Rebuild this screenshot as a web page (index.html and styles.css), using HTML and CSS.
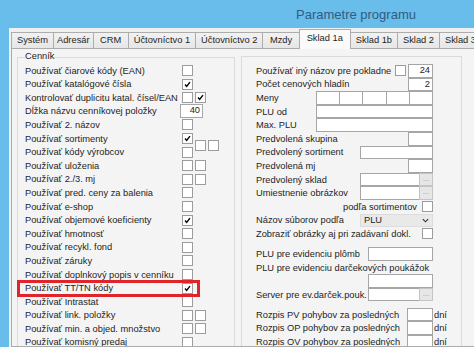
FILE: index.html
```html
<!DOCTYPE html>
<html lang="sk">

<head>
    <meta charset="UTF-8">
    <title>Parametre programu</title>
    <link rel="stylesheet" href="styles.css">
</head>

<body>

    <div class="window">
        <div class="titlebar"><span class="title">Parametre programu</span></div>

        <div class="client">
            <div class="tabs">
                <div class="tab">Systém</div>
                <div class="tab">Adresár</div>
                <div class="tab">CRM</div>
                <div class="tab">Účtovníctvo 1</div>
                <div class="tab">Účtovníctvo 2</div>
                <div class="tab">Mzdy</div>
                <div class="tab active">Sklad 1a</div>
                <div class="tab">Sklad 1b</div>
                <div class="tab">Sklad 2</div>
                <div class="tab">Sklad 3</div>
            </div>

            <div class="page">
                <!-- left group -->
                <div class="group group-left">
                    <div class="caption">Cenník</div>
                    <div class="row"><span class="label">Používať čiarové kódy (EAN)</span><span class="chk"></span></div>
                    <div class="row"><span class="label">Používať katalógové čísla</span><span class="chk"><svg viewBox="0 0 11 11"><polyline points="2.5,5.5 4.5,7.8 8.5,2.5"/></svg></span></div>
                    <div class="row"><span class="label">Kontrolovať duplicitu katal. čísel/EAN</span><span class="chk"></span><span class="chk"><svg viewBox="0 0 11 11"><polyline points="2.5,5.5 4.5,7.8 8.5,2.5"/></svg></span></div>
                    <div class="row"><span class="label">Dĺžka názvu cenníkovej položky</span><span class="box num short">40</span></div>
                    <div class="row"><span class="label">Používať 2. názov</span><span class="chk"></span></div>
                    <div class="row"><span class="label">Používať sortimenty</span><span class="chk"><svg viewBox="0 0 11 11"><polyline points="2.5,5.5 4.5,7.8 8.5,2.5"/></svg></span></div>
                    <div class="row"><span class="label">Používať kódy výrobcov</span><span class="chk"></span><span class="raised"><span class="chk"></span><span class="chk"></span></span></div>
                    <div class="row"><span class="label">Používať uloženia</span><span class="chk"></span><span class="chk"></span></div>
                    <div class="row"><span class="label">Používať 2./3. mj</span><span class="chk"></span><span class="chk"></span></div>
                    <div class="row"><span class="label">Používať pred. ceny za balenia</span><span class="chk"></span></div>
                    <div class="row"><span class="label">Používať e-shop</span><span class="chk"></span></div>
                    <div class="row"><span class="label">Používať objemové koeficienty</span><span class="chk"><svg viewBox="0 0 11 11"><polyline points="2.5,5.5 4.5,7.8 8.5,2.5"/></svg></span></div>
                    <div class="row"><span class="label">Používať hmotnosť</span><span class="chk"></span></div>
                    <div class="row"><span class="label">Používať recykl. fond</span><span class="chk"></span></div>
                    <div class="row"><span class="label">Používať záruky</span><span class="chk"></span></div>
                    <div class="row"><span class="label">Používať doplnkový popis v cenníku</span><span class="chk"></span></div>
                    <div class="row marked"><span class="label">Používať TT/TN kódy</span><span class="chk"><svg viewBox="0 0 11 11"><polyline points="2.5,5.5 4.5,7.8 8.5,2.5"/></svg></span></div>
                    <div class="row"><span class="label">Používať Intrastat</span><span class="chk"></span></div>
                    <div class="row"><span class="label">Používať link. položky</span><span class="chk"></span><span class="chk"></span></div>
                    <div class="row"><span class="label">Používať min. a objed. množstvo</span><span class="chk"></span><span class="chk"></span></div>
                    <div class="row"><span class="label">Používať komisný predaj</span><span class="chk"></span></div>
                </div>

                <!-- right group -->
                <div class="group group-right">
                    <div class="row"><span class="label">Používať iný názov pre pokladne</span><span class="chk gap"></span><span class="box num short">24</span></div>
                    <div class="row"><span class="label">Počet cenových hladín</span><span class="box num short">2</span></div>
                    <div class="row"><span class="label">Meny</span>
                        <span class="cells"><span class="box cell"></span><span class="box cell"></span><span class="box cell"></span><span class="box cell"></span><span class="box cell"></span></span>
                    </div>
                    <div class="row"><span class="label">PLU od</span><span class="box wide"></span></div>
                    <div class="row"><span class="label">Max. PLU</span><span class="box wide"></span></div>
                    <div class="row"><span class="label">Predvolená skupina</span><span class="box short"></span></div>
                    <div class="row"><span class="label">Predvolený sortiment</span><span class="box mid"></span></div>
                    <div class="row"><span class="label">Predvolená mj</span><span class="box short"></span></div>
                    <div class="row"><span class="label">Predvolený sklad</span><span class="box mid-btn"></span><span class="dots">...</span></div>
                    <div class="row"><span class="label">Umiestnenie obrázkov</span><span class="box mid-btn"></span><span class="dots">...</span></div>
                    <div class="row end"><span class="sub-label">podľa sortimentov</span><span class="chk"></span></div>
                    <div class="row"><span class="label">Názov súborov podľa</span>
                        <span class="select">PLU<svg viewBox="0 0 8 5"><polyline points="1,1 4,4 7,1"/></svg></span>
                    </div>
                    <div class="row"><span class="label">Zobraziť obrázky aj pri zadávaní dokl.</span><span class="chk"></span></div>

                    <div class="block">
                        <div class="row"><span class="label">PLU pre evidenciu plômb</span><span class="box plu"></span></div>
                        <div class="row"><span class="label">PLU pre evidenciu darčekových poukážok</span></div>
                        <div class="row end"><span class="box plu"></span></div>
                        <div class="row"><span class="label">Server pre ev.darček.pouk.</span><span class="box plu-btn"></span><span class="dots">...</span></div>
                    </div>

                    <div class="block">
                        <div class="row"><span class="label">Rozpis PV pohybov za posledných</span><span class="box days"></span><span class="unit">dní</span></div>
                        <div class="row"><span class="label">Rozpis OP pohybov za posledných</span><span class="box days"></span><span class="unit">dní</span></div>
                        <div class="row"><span class="label">Rozpis OV pohybov za posledných</span><span class="box days"></span><span class="unit">dní</span></div>
                        <div class="row"><span class="label"></span><span class="box days"></span><span class="unit"></span></div>
                    </div>
                </div>
            </div>
        </div>
    </div>

</body>

</html>
```

FILE: styles.css
```css
*,
*::before,
*::after {
    box-sizing: border-box;
}

body {
    margin: 0;
    width: 474px;
    height: 347px;
    overflow: hidden;
    background-color: #69bdea;
    font-family: 'Liberation Sans', Arial, sans-serif;
    font-size: 9.3px;
    color: #1e1e1e;
}

.window {
    display: flex;
    flex-direction: column;
    height: 347px;
}

.titlebar {
    flex-shrink: 0;
    height: 28px;
    display: flex;
    align-items: center;
    padding-left: 296px;
    font-size: 13px;
    color: #2f5c82;
}

.client {
    flex: 1;
    min-height: 0;
    width: 540px;
    margin-left: 9px;
    background-color: #f0f0f0;
    display: flex;
    flex-direction: column;
}

/* tab strip */
.tabs {
    flex-shrink: 0;
    height: 20px;
    display: flex;
    align-items: flex-end;
    padding-left: 3px;
}

.tab {
    height: 16px;
    line-height: 14px;
    padding: 0 5px;
    margin-left: -1px;
    border: 1px solid #acacac;
    border-bottom: none;
    background: linear-gradient(#f2f2f2, #e6e6e6);
    white-space: nowrap;
}

.tab:nth-child(2) {
    padding: 0 3px;
}

.tab:nth-child(3),
.tab:nth-child(6) {
    padding: 0 6.5px;
}

.tab.active {
    position: relative;
    z-index: 1;
    height: 20px;
    margin-bottom: -1px;
    padding: 0 7px;
    line-height: 16px;
    background: #fafafa;
}

.page {
    flex: 1;
    min-height: 0;
    margin-left: 2px;
    border: 1px solid #acacac;
    background-color: #f4f4f4;
    display: flex;
    align-items: flex-start;
    overflow: hidden;
}

/* group boxes */
.group {
    flex-shrink: 0;
    border: 1px solid #dadada;
    border-bottom: none;
}

.group-left {
    width: 218px;
    margin: 8px 0 0 5px;
    padding: 0 0 0 7px;
}

.caption {
    width: fit-content;
    height: 13.6px;
    margin-top: -7.8px;
    line-height: 13.6px;
    background-color: #f4f4f4;
}

.group-right {
    width: 221px;
    margin: 7px 0 0 6px;
    padding: 7px 28px 0 14px;
}

.block {
    margin-top: 6.4px;
}

/* rows */
.row {
    flex-shrink: 0;
    height: 13.6px;
    display: flex;
    align-items: center;
    white-space: nowrap;
}

.group-left .label {
    width: 157px;
}

.group-right .label {
    flex: 1;
}

.row.end {
    justify-content: flex-end;
}

.sub-label {
    margin-right: 5px;
}

.marked {
    position: relative;
}

.marked::after {
    content: '';
    position: absolute;
    left: -8px;
    top: -1.8px;
    width: 183px;
    height: 17.6px;
    border: 3px solid #e0242a;
}

/* controls */
.chk {
    width: 11px;
    height: 11px;
    margin-right: 2px;
    border: 1px solid #9c9c9c;
    background-color: #fff;
    display: flex;
}

.group-right .chk {
    margin-right: 0;
}

.chk.gap {
    margin-right: 2px;
}

.chk svg {
    width: 9px;
    height: 9px;
    fill: none;
    stroke: #000;
    stroke-width: 1.7;
}

.raised {
    display: flex;
    transform: translateY(-7px);
}

.box {
    height: 13.6px;
    border: 1px solid #a6a6a6;
    background-color: #fff;
    line-height: 11.6px;
    padding: 0 2px;
}

.num {
    text-align: right;
}

.group-left .short {
    width: 23px;
    margin-left: -2px;
    height: 14px;
}

.group-right .short {
    width: 25px;
}

.cells {
    display: flex;
}

.cell {
    width: 24.2px;
    margin-left: -1px;
}

.wide {
    width: 117px;
}

.mid {
    width: 73px;
}

.mid-btn {
    width: 60px;
}

.plu {
    width: 65px;
}

.plu-btn {
    width: 52px;
}

.days {
    width: 26px;
}

.unit {
    width: 18px;
    margin-right: -18px;
    padding-left: 1px;
}

.dots {
    width: 14px;
    height: 13.6px;
    margin-left: -1px;
    border: 1px solid #c4c4c4;
    background-color: #e6e6e6;
    color: #9a9a9a;
    font-size: 8px;
    line-height: 10px;
    text-align: center;
}

.select {
    width: 73px;
    height: 13.6px;
    padding: 0 3px;
    border: 1px solid #dcdcdc;
    background-color: #e9e9e9;
    display: flex;
    align-items: center;
    justify-content: space-between;
}

.select svg {
    width: 7px;
    height: 5px;
    fill: none;
    stroke: #333;
    stroke-width: 1.3;
}
```
